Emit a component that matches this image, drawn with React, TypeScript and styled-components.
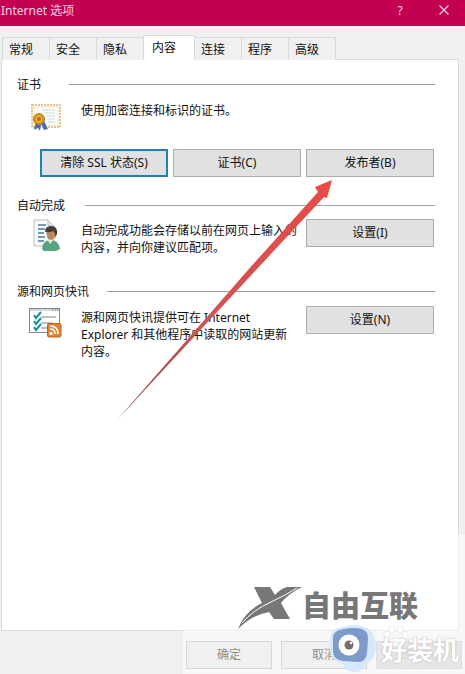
import React, { useState } from "react";
import styled, { createGlobalStyle } from "styled-components";

const GlobalStyle = createGlobalStyle`
  * { box-sizing: border-box; }
  body {
    margin: 0;
    background: #f0f0f0;
    color: #111;
    font: 12px/17px "Noto Sans", "Noto Sans CJK SC", sans-serif;
  }
  button { font: inherit; color: inherit; margin: 0; padding: 0; }
  h2, p { margin: 0; font: inherit; }
`;

const Dialog = styled.main`
  position: relative;
  display: flex;
  flex-direction: column;
  min-height: 100vh;
  overflow: hidden;
`;

const TitleBar = styled.header`
  display: flex;
  align-items: center;
  height: 26px;
  padding: 0 10px 6px 1px;
  background: #c40052;
  color: #f6d3e1;
`;

const Title = styled.span`
  flex: 1;
`;

const WindowButton = styled.button`
  display: flex;
  align-items: center;
  justify-content: center;
  width: 42px;
  height: 20px;
  border: 0;
  background: none;
  &:last-child { width: 22px; margin-left: 12px; }
`;

const TabList = styled.div`
  display: flex;
  align-items: flex-end;
  height: 34px;
  padding-left: 2px;
`;

const Tab = styled.button<{ $active: boolean }>`
  position: relative;
  width: ${(p) => (p.$active ? 52 : 48)}px;
  height: ${(p) => (p.$active ? 25 : 23)}px;
  margin-right: -1px;
  padding-left: ${(p) => (p.$active ? 8 : 6)}px;
  padding-bottom: ${(p) => (p.$active ? 2 : 0)}px;
  text-align: left;
  border: 1px solid #d5dadb;
  border-bottom: 0;
  background: ${(p) => (p.$active ? "#fff" : "#f0f0f0")};
`;

const Panel = styled.section`
  flex: 1;
  margin: -1px 6px 0 1px;
  padding: 16px 23px 0 15px;
  border: 1px solid #d9d9d9;
  background: #fff;
`;

const Heading = styled.h2<{ $gap: number }>`
  display: flex;
  align-items: center;
  gap: ${(p) => p.$gap}px;
  &::after {
    content: "";
    flex: 1;
    height: 1px;
    background: #a0a0a0;
  }
`;

const Row = styled.div`
  display: grid;
  grid-template-columns: 64px minmax(0, 1fr) 128px;
  align-items: start;
  padding-right: 1px;
`;

const Group = styled.section<{ $space: number; $gap: number }>`
  display: flex;
  flex-direction: column;
  gap: ${(p) => p.$gap}px;
  padding-bottom: ${(p) => p.$space}px;
`;

const IconCell = styled.span`
  display: flex;
  padding-left: 12px;
`;

const Copy = styled.p<{ $top?: number }>`
  padding-top: ${(p) => p.$top ?? 0}px;
  white-space: pre-line;
`;

const Buttons = styled.div`
  display: grid;
  grid-template-columns: repeat(3, 1fr);
  gap: 5px;
  padding: 8px 1px 0 23px;
`;

const PushButton = styled.button<{ $focused?: boolean }>`
  height: 28px;
  width: 100%;
  padding-bottom: 1px;
  background: #e1e1e1;
  border: ${(p) => (p.$focused ? "2px solid #237fac" : "1px solid #adadad")};
  box-shadow: ${(p) => (p.$focused ? "inset 0 0 0 1px #cde3f3" : "none")};
`;

const Footer = styled.footer`
  display: flex;
  justify-content: flex-end;
  gap: 9px;
  height: 43px;
  padding: 10px 3px 5px;
`;

const FooterButton = styled(PushButton)`
  width: 86px;
  &:disabled { color: #b4b4b4; background: #ccc; border-color: #bfbfbf; }
`;

const Arrow = styled.svg`
  position: absolute;
  left: 117px;
  top: 179px;
  pointer-events: none;
`;

const Veil = styled.div`
  position: absolute;
  right: 0;
  bottom: 0;
  width: 282px;
  height: 139px;
  background: rgba(255, 255, 255, 0.5);
  pointer-events: none;
`;

const GreyMark = styled.div`
  position: absolute;
  right: 47px;
  bottom: 44px;
  display: flex;
  align-items: flex-start;
  color: #777;
  font: 900 29px/36px "Noto Sans CJK SC", sans-serif;
  pointer-events: none;
`;

const EyeMark = styled.div`
  position: absolute;
  right: 6px;
  bottom: 0;
  display: flex;
  align-items: center;
  color: #fff;
  font: 700 26px/50px "Noto Sans CJK SC", sans-serif;
  text-shadow: 0 0 2px #bbb, 0 0 1px #bbb;
  pointer-events: none;
  & > svg { margin-right: 2px; }
`;

const PawMark = styled.svg`
  position: absolute;
  right: 56px;
  bottom: 26px;
  pointer-events: none;
`;

const CertificateIcon = () => (
  <svg width="34" height="30" viewBox="0 0 34 30" aria-hidden="true">
    <rect x="3" y="3" width="28" height="22" fill="#fffdf5" stroke="#e3c594" strokeWidth="2" strokeDasharray="2 1" />
    <rect x="5" y="5" width="24" height="18" fill="#fff" stroke="#f3e7c6" />
    <path d="M13 8h13M15 11h11M17 14h9M18 17h8M19 20h7" stroke="#c5d7e0" strokeWidth="1" />
    <path d="M7 19l-2 9 4-2 2 3 1-7 3 6 4-1-4-8z" fill="#4a6cb0" />
    <circle cx="10" cy="17" r="5.5" fill="#d9981d" stroke="#b97a12" />
    <circle cx="10" cy="17" r="2.7" fill="#ba720e" stroke="#f3c659" />
  </svg>
);

const PersonPageIcon = () => (
  <svg width="32" height="32" viewBox="0 0 32 32" aria-hidden="true">
    <path d="M5 1h14l6 6v20H5z" fill="#fbfbfb" stroke="#b8bec2" />
    <path d="M19 1v6h6" fill="#e3e7e9" stroke="#b8bec2" />
    <path d="M9 6h8M9 10h7M9 14h6M9 18h7M9 22h6" stroke="#4378a1" strokeWidth="1.5" />
    <path d="M13 30q0-8 8-9 9 0 10 9l-4 2H15z" fill="#57a47f" />
    <path d="M18 20l3 5 4-5z" fill="#e1efe6" />
    <ellipse cx="22" cy="15" rx="4.5" ry="6" fill="#b98a60" />
    <path d="M16 13q0-6 6-6 7 0 6 8l-2 4q1-5-2-7-4 2-7 1z" fill="#493d35" />
  </svg>
);

const FeedIcon = () => (
  <svg width="34" height="32" viewBox="0 0 34 32" aria-hidden="true">
    <rect x="0.5" y="2.5" width="30" height="24" fill="#fff" stroke="#7d8791" />
    <path d="M1 4h29" stroke="#d3dade" strokeWidth="2" />
    <path d="M23 4h1m2 0h1m1 0h1" stroke="#55616a" strokeWidth="1" />
    <path d="M12 11h15M12 17h12M12 22h6" stroke="#79838b" strokeWidth="1" />
    <path d="M5 9l2 3 5-6M5 15l2 3 5-6M5 21l2 3 5-6" fill="none" stroke="#179096" strokeWidth="2" />
    <rect x="18.5" y="17.5" width="13.5" height="13.5" rx="1.5" fill="#e18331" stroke="#bd651c" />
    <circle cx="22" cy="27.5" r="1.5" fill="#fff" />
    <path d="M21 23q5 0 5 5M21 20q8 0 8 8" fill="none" stroke="#fff" strokeWidth="1.7" />
  </svg>
);

const tabs = ["常规", "安全", "隐私", "内容", "连接", "程序", "高级"];

export default function App() {
  const [active, setActive] = useState("内容");
  return (
    <>
      <GlobalStyle />
      <Dialog>
        <TitleBar>
          <Title>Internet 选项</Title>
          <WindowButton aria-label="帮助">?</WindowButton>
          <WindowButton aria-label="关闭">
            <svg width="10" height="10" viewBox="0 0 10 10" aria-hidden="true">
              <path d="M0.5.5l9 9m0-9l-9 9" stroke="currentColor" strokeWidth="1.3" />
            </svg>
          </WindowButton>
        </TitleBar>
        <TabList role="tablist">
          {tabs.map((name) => (
            <Tab key={name} role="tab" aria-selected={name === active} $active={name === active} onClick={() => setActive(name)}>
              {name}
            </Tab>
          ))}
        </TabList>
        <Panel role="tabpanel" aria-label={active}>
          <Group $gap={9} $space={20}>
            <Heading $gap={28}>证书</Heading>
            <Row>
              <IconCell><CertificateIcon /></IconCell>
              <Copy>使用加密连接和标识的证书。</Copy>
            </Row>
            <Buttons>
              <PushButton $focused>清除 SSL 状态(S)</PushButton>
              <PushButton>证书(C)</PushButton>
              <PushButton>发布者(B)</PushButton>
            </Buttons>
          </Group>
          <Group $gap={5} $space={27}>
            <Heading $gap={20}>自动完成</Heading>
            <Row>
              <IconCell><PersonPageIcon /></IconCell>
              <Copy $top={3}>{"自动完成功能会存储以前在网页上输入的\n内容，并向你建议匹配项。"}</Copy>
              <PushButton>设置(I)</PushButton>
            </Row>
          </Group>
          <Group $gap={6} $space={0}>
            <Heading $gap={18}>源和网页快讯</Heading>
            <Row>
              <IconCell><FeedIcon /></IconCell>
              <Copy $top={3}>{"源和网页快讯提供可在 Internet\nExplorer 和其他程序中读取的网站更新\n内容。"}</Copy>
              <PushButton>设置(N)</PushButton>
            </Row>
          </Group>
        </Panel>
        <Footer>
          <FooterButton>确定</FooterButton>
          <FooterButton>取消</FooterButton>
          <FooterButton disabled>应用(A)</FooterButton>
        </Footer>
        <Arrow width="216" height="242" viewBox="0 0 216 242" aria-hidden="true">
          <defs>
            <linearGradient id="shaft" x1="0" y1="1" x2="1" y2="0">
              <stop offset="0" stopColor="#8d4a4c" />
              <stop offset="0.4" stopColor="#cf5353" />
              <stop offset="1" stopColor="#e94b46" />
            </linearGradient>
          </defs>
          <path d="M0 241L131 91 201 13 198 8 215 1 210 19 207 18 139 91z" fill="url(#shaft)" />
        </Arrow>
        <Veil />
        <GreyMark>
          <svg width="64" height="44" viewBox="0 0 64 44" aria-hidden="true">
            <path d="M16 1H32L37 9Q42 3 49 1H64Q50 8 43 17L52 33H36L31 26Q14 29 0 43 6 26 24 17z" fill="#777" />
            <path d="M4 37Q15 24 33 16 48 9 59 2" fill="none" stroke="#fff" strokeWidth="1" />
          </svg>
          <span>自由互联</span>
        </GreyMark>
        <PawMark width="26" height="24" viewBox="0 0 26 24" aria-hidden="true">
          <g fill="#fff" stroke="#e4e4e4" strokeWidth="0.7">
            <ellipse cx="4" cy="11" rx="3" ry="4" />
            <ellipse cx="9" cy="5" rx="3" ry="4" />
            <ellipse cx="17" cy="5" rx="3" ry="4" />
            <ellipse cx="22" cy="11" rx="3" ry="4" />
            <path d="M13 11q7 5 6 10-6 3-12 0-1-5 6-10z" />
          </g>
        </PawMark>
        <EyeMark>
          <svg width="52" height="50" viewBox="0 0 52 50" aria-hidden="true">
            <path d="M3 16Q3 4 16 3q13-4 21 0 11 3 12 19 0 14-11 18-1 8-11 8-9 0-11-8Q4 37 3 27z" fill="#d6e8fb" />
            <path d="M6 13Q7 6 17 5q10-2 18 0 6 2 6 10l-1 14q-1 9-9 9l-15-1Q7 36 6 28z" fill="#7e9acb" />
            <circle cx="22" cy="21" r="10.5" fill="#fff" />
            <circle cx="22" cy="21" r="4.5" fill="#746d6a" />
            <circle cx="24" cy="19" r="1.3" fill="#fff" />
          </svg>
          <span>好装机</span>
        </EyeMark>
      </Dialog>
    </>
  );
}
